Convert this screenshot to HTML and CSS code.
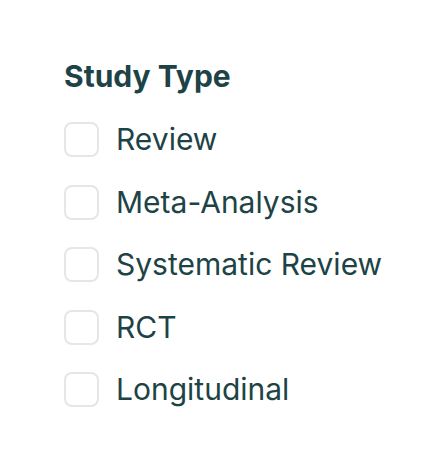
FILE: index.html
```html
<!DOCTYPE html>
<html>
<head>
<meta charset="utf-8">
<link rel="stylesheet" href="styles.css">
</head>
<body>
<section class="filter">
  <h2 class="filter-title">Study Type</h2>
  <ul class="options">
    <li class="option"><span class="box"></span><span class="label">Review</span></li>
    <li class="option"><span class="box"></span><span class="label">Meta-Analysis</span></li>
    <li class="option"><span class="box"></span><span class="label">Systematic Review</span></li>
    <li class="option"><span class="box"></span><span class="label">RCT</span></li>
    <li class="option"><span class="box"></span><span class="label">Longitudinal</span></li>
  </ul>
</section>
</body>
</html>
```
FILE: styles.css
```css
html, body {
  margin: 0;
  padding: 0;
  background: #ffffff;
}
body {
  font-family: Inter, "Noto Sans", sans-serif;
  color: #1d4346;
}
.filter {
  padding: 58px 0 0 64px;
}
.filter-title {
  margin: 0;
  font-size: 30px;
  font-weight: 700;
  line-height: 36px;
  color: #1d4346;
}
.options {
  list-style: none;
  margin: 28px 0 0 0;
  padding: 0;
  display: flex;
  flex-direction: column;
  gap: 27.5px;
}
.option {
  display: flex;
  align-items: center;
  gap: 17px;
  height: 35px;
}
.box {
  box-sizing: border-box;
  width: 35px;
  height: 35px;
  border: 2px solid #e6e6e6;
  border-radius: 8px;
  flex: none;
}
.label {
  font-size: 30px;
  line-height: 35px;
  font-weight: 400;
}
```
